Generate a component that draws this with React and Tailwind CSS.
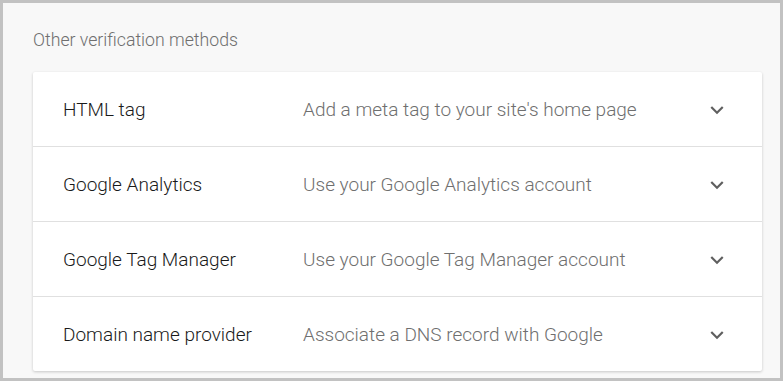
export default function App() {
  const rows = [
    ["HTML tag", "Add a meta tag to your site's home page"],
    ["Google Analytics", "Use your Google Analytics account"],
    ["Google Tag Manager", "Use your Google Tag Manager account"],
    ["Domain name provider", "Associate a DNS record with Google"],
  ];
  return (
    <div
      className="w-[783px] h-[381px] border-[3px] border-[#c2c2c2] bg-[#f8f8f8] overflow-hidden"
      style={{ fontFamily: "Roboto, 'Liberation Sans', sans-serif" }}
    >
      <div className="pl-[30px] pr-[18px] pt-[25px]">
        <div className="text-[17.7px] font-light leading-[24px] text-[#6f6f6f] h-[44px]">Other verification methods</div>
        <div className="bg-white rounded-[2px] shadow-[0_1px_3px_rgba(0,0,0,0.2)]">
          {rows.map(([a, b], i) => (
            <div
              key={a}
              className={`flex items-center pl-[30px] pr-[32px] pt-[2px] ${i > 0 ? "h-[75px] border-t border-[#e0e0e0]" : "h-[74px]"}`}
            >
              <div className="w-[240px] text-[19px] font-light text-[#1a1a1a]">{a}</div>
              <div className="flex-1 text-[19px] font-light text-[#6f6f6f]">{b}</div>
              <svg width="26" height="26" viewBox="0 0 24 24" fill="#5f5f5f">
                <path d="M16.59 8.59 12 13.17 7.41 8.59 6 10l6 6 6-6z" />
              </svg>
            </div>
          ))}
        </div>
      </div>
    </div>
  );
}
